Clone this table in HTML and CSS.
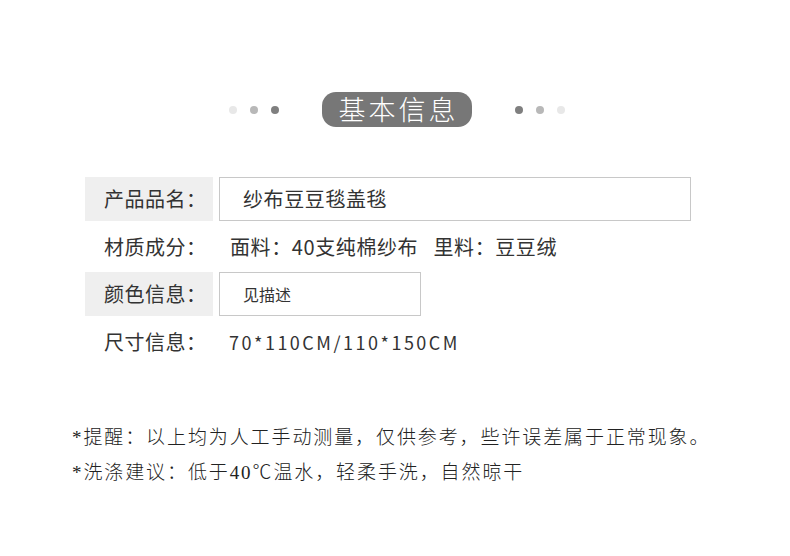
FILE: index.html
```html
<!DOCTYPE html>
<html lang="zh-CN">
<head>
    <meta charset="UTF-8">
    <title>基本信息</title>
    <link rel="stylesheet" href="styles.css">
</head>
<body>
    <div class="page">
        <div class="title-row">
            <div class="dots">
                <span class="dot light"></span>
                <span class="dot mid"></span>
                <span class="dot dark"></span>
            </div>
            <div class="pill">基本信息</div>
            <div class="dots">
                <span class="dot dark"></span>
                <span class="dot mid"></span>
                <span class="dot light"></span>
            </div>
        </div>

        <div class="info">
            <div class="row">
                <div class="label shaded">产品品名：</div>
                <div class="value boxed wide">纱布豆豆毯盖毯</div>
            </div>
            <div class="row">
                <div class="label">材质成分：</div>
                <div class="value plain">面料：40支纯棉纱布&nbsp;&nbsp;&nbsp;里料：豆豆绒</div>
            </div>
            <div class="row">
                <div class="label shaded">颜色信息：</div>
                <div class="value boxed narrow">见描述</div>
            </div>
            <div class="row">
                <div class="label">尺寸信息：</div>
                <div class="value plain size">70*110CM/110*150CM</div>
            </div>
        </div>

        <div class="notes">
            <p>*提醒：以上均为人工手动测量，仅供参考，些许误差属于正常现象。</p>
            <p>*洗涤建议：低于40℃温水，轻柔手洗，自然晾干</p>
        </div>
    </div>
</body>
</html>
```

FILE: styles.css
```css
body {
    margin: 0;
    background-color: #fff;
    color: #333;
    font-family: "Noto Sans CJK SC", "Noto Sans", sans-serif;
}
.page {
    width: 790px;
    height: 556px;
    overflow: hidden;
}
.title-row {
    display: flex;
    justify-content: center;
    align-items: center;
    padding-top: 92px;
    padding-left: 4px;
}
.dots {
    display: flex;
    gap: 13px;
}
.dot {
    width: 8px;
    height: 8px;
    border-radius: 50%;
}
.dot.light {
    background-color: #e8e8e8;
}
.dot.mid {
    background-color: #b8b8b8;
}
.dot.dark {
    background-color: #7f7f7f;
}
.pill {
    margin: 0 43px;
    width: 150px;
    height: 35px;
    line-height: 34px;
    border-radius: 14px;
    background-color: #777;
    color: #fff;
    font-size: 27px;
    font-weight: 300;
    letter-spacing: 3px;
    text-indent: 3px;
    text-align: center;
}
.info {
    display: flex;
    flex-direction: column;
    gap: 3.5px;
    margin: 50px 0 0 85px;
}
.row {
    display: flex;
    gap: 6px;
    height: 44px;
}
.label {
    width: 128px;
    box-sizing: border-box;
    padding-left: 19px;
    font-size: 20px;
    line-height: 44px;
    letter-spacing: 0.5px;
}
.label.shaded {
    background-color: #efefef;
}
.value {
    box-sizing: border-box;
    font-size: 20px;
    line-height: 42px;
}
.value.boxed {
    border: 1px solid #c8c8c8;
    padding-left: 23px;
}
.value.wide {
    width: 472px;
    letter-spacing: 0.6px;
}
.value.narrow {
    width: 202px;
    font-size: 16px;
}
.value.plain {
    line-height: 44px;
    padding-left: 11px;
    letter-spacing: 0.6px;
}
.value.size {
    font-size: 18px;
    letter-spacing: 2.5px;
    padding-left: 10px;
}
.notes {
    margin: 56px 0 0 72px;
    color: #222;
    font-family: "Liberation Serif", "Noto Sans CJK SC", serif;
    font-size: 19px;
    font-weight: 300;
    letter-spacing: 1.9px;
}
.notes p {
    margin: 0;
    line-height: 35px;
}
```
